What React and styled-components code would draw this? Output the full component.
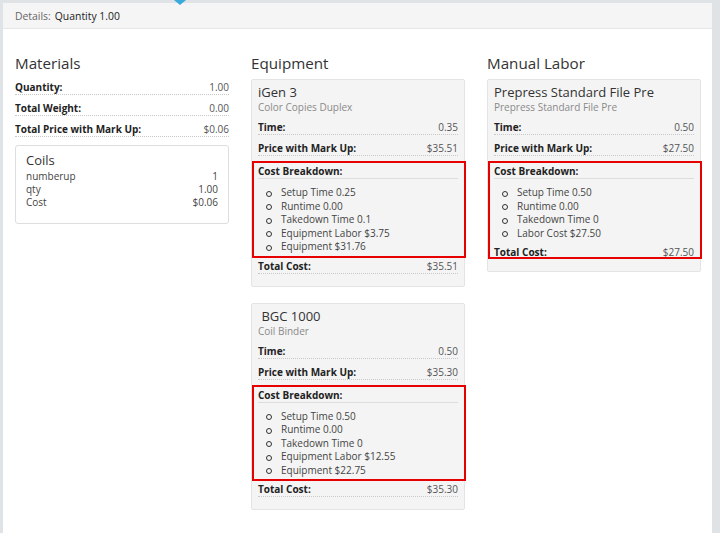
import React from "react";
import styled, { createGlobalStyle } from "styled-components";

const Global = createGlobalStyle`
  html, body { margin: 0; padding: 0; }
  body {
    background: #dfe3e6;
    font-family: "Open Sans", "Liberation Sans", sans-serif;
    color: #333;
  }
`;

const Page = styled.div`
  position: relative;
  padding: 3px 8px 0 3px;
  min-height: 530px;
  background: #dfe3e6;
`;

const Caret = styled.div`
  position: absolute;
  top: 0;
  left: 174px;
  width: 0;
  height: 0;
  border-left: 6px solid transparent;
  border-right: 6px solid transparent;
  border-top: 5px solid #3aaade;
`;

const Panel = styled.div`
  background: #fff;
  min-height: 530px;
`;

const Header = styled.div`
  height: 25px;
  display: flex;
  align-items: center;
  padding: 0 12px;
  background: #f5f5f5;
  border-bottom: 1px solid #e6e6e6;
  font-size: 10.4px;
  color: #222;
`;

const Muted = styled.span`
  color: #666;
  margin-right: 4px;
`;

const Body = styled.div`
  display: grid;
  grid-template-columns: repeat(3, 214px);
  column-gap: 22px;
  padding: 23px 11px 20px 12px;
  align-items: start;
`;

const Column = styled.div`
  display: flex;
  flex-direction: column;
`;

const ColTitle = styled.h3`
  margin: 0;
  font-size: 15.2px;
  line-height: 22px;
  font-weight: 400;
  color: #333;
`;

const Row = styled.div`
  display: flex;
  justify-content: space-between;
  padding-top: ${(p) => (p.$tight ? 1 : p.$short ? 7 : 6)}px;
  line-height: ${(p) => (p.$short ? 10 : 14)}px;
  font-size: 10px;
  border-bottom: 1px ${(p) => (p.$solid ? "solid #dcdcdc" : "dotted #c8c8c8")};
  ${(p) => p.$noBorder && "border-bottom: none;"}
`;

const Label = styled.span`
  font-weight: 700;
  color: #222;
`;

const Value = styled.span`
  color: #555;
`;

const InfoBox = styled.div`
  margin-top: 8px;
  border: 1px solid #dedede;
  border-radius: 3px;
  padding: 5px 10px 14px 10px;
`;

const BoxTitle = styled.div`
  font-size: 13px;
  line-height: 18px;
  color: #333;
  margin-bottom: 1px;
`;

const KV = styled.div`
  display: flex;
  justify-content: space-between;
  font-size: 10px;
  line-height: 13px;
  color: #444;
`;

const Stack = styled.div`
  display: flex;
  flex-direction: column;
  gap: 16px;
  margin-top: 5px;
`;

const Card = styled.div`
  background: #f4f4f4;
  border: 1px solid #e4e4e4;
  border-radius: 2px;
  padding: 4px 6px ${(p) => p.$pb ?? 12}px 6px;
`;

const CardTitle = styled.div`
  font-size: 13px;
  line-height: 17px;
  color: #333;
`;

const CardSub = styled.div`
  font-size: 10px;
  line-height: 13px;
  color: #8a8a8a;
`;

const Highlight = styled.div`
  margin: 5px -8px 0 -6px;
  border: 2px solid #e60000;
  padding: 0 6px ${(p) => p.$pb ?? 2}px 4px;
`;

const Items = styled.ul`
  list-style: none;
  margin: 7px 0 0;
  padding: 0 0 0 23px;
`;

const Item = styled.li`
  position: relative;
  font-size: 10px;
  line-height: 13.5px;
  color: #444;
  &::before {
    content: "";
    position: absolute;
    left: -15px;
    top: 4.5px;
    width: 4px;
    height: 4px;
    border: 1.3px solid #333;
    border-radius: 50%;
  }
`;

const Breakdown = ({ items, total, totalInside }) => (
  <>
    <Highlight $pb={totalInside ? 0 : 2}>
      <Row $tight $solid>
        <Label>Cost Breakdown:</Label>
      </Row>
      <Items>
        {items.map((t) => (
          <Item key={t}>{t}</Item>
        ))}
      </Items>
      {totalInside && (
        <Row $noBorder $short>
          <Label>Total Cost:</Label>
          <Value>{total}</Value>
        </Row>
      )}
    </Highlight>
    {!totalInside && (
      <Row $tight>
        <Label>Total Cost:</Label>
        <Value>{total}</Value>
      </Row>
    )}
  </>
);

const ItemCard = ({ title, sub, time, price, items, total, totalInside }) => (
  <Card $pb={12}>
    <CardTitle>{title}</CardTitle>
    <CardSub>{sub}</CardSub>
    <Row>
      <Label>Time:</Label>
      <Value>{time}</Value>
    </Row>
    <Row>
      <Label>Price with Mark Up:</Label>
      <Value>{price}</Value>
    </Row>
    <Breakdown items={items} total={total} totalInside={totalInside} />
  </Card>
);

export default function App() {
  return (
    <>
      <Global />
      <Page>
        <Caret />
        <Panel>
          <Header>
            <Muted>Details:</Muted> Quantity 1.00
          </Header>
          <Body>
            <Column>
              <ColTitle>Materials</ColTitle>
              <Row>
                <Label>Quantity:</Label>
                <Value>1.00</Value>
              </Row>
              <Row>
                <Label>Total Weight:</Label>
                <Value>0.00</Value>
              </Row>
              <Row>
                <Label>Total Price with Mark Up:</Label>
                <Value>$0.06</Value>
              </Row>
              <InfoBox>
                <BoxTitle>Coils</BoxTitle>
                <KV>
                  <span>numberup</span>
                  <span>1</span>
                </KV>
                <KV>
                  <span>qty</span>
                  <span>1.00</span>
                </KV>
                <KV>
                  <span>Cost</span>
                  <span>$0.06</span>
                </KV>
              </InfoBox>
            </Column>
            <Column>
              <ColTitle>Equipment</ColTitle>
              <Stack>
                <ItemCard
                  title="iGen 3"
                  sub="Color Copies Duplex"
                  time="0.35"
                  price="$35.51"
                  items={[
                    "Setup Time 0.25",
                    "Runtime 0.00",
                    "Takedown Time 0.1",
                    "Equipment Labor $3.75",
                    "Equipment $31.76",
                  ]}
                  total="$35.51"
                />
                <ItemCard
                  title={"\u00a0BGC 1000"}
                  sub="Coil Binder"
                  time="0.50"
                  price="$35.30"
                  items={[
                    "Setup Time 0.50",
                    "Runtime 0.00",
                    "Takedown Time 0",
                    "Equipment Labor $12.55",
                    "Equipment $22.75",
                  ]}
                  total="$35.30"
                />
              </Stack>
            </Column>
            <Column>
              <ColTitle>Manual Labor</ColTitle>
              <Stack>
                <ItemCard
                  title="Prepress Standard File Pre"
                  sub="Prepress Standard File Pre"
                  time="0.50"
                  price="$27.50"
                  items={[
                    "Setup Time 0.50",
                    "Runtime 0.00",
                    "Takedown Time 0",
                    "Labor Cost $27.50",
                  ]}
                  total="$27.50"
                  totalInside
                />
              </Stack>
            </Column>
          </Body>
        </Panel>
      </Page>
    </>
  );
}
